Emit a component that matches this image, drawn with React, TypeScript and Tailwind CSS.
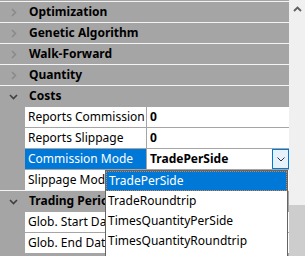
import React from 'react';

type Row =
  | { kind: 'cat'; label: string; open: boolean }
  | { kind: 'prop'; label: string; value?: string; selected?: boolean; combo?: boolean };

const rows: Row[] = [
  { kind: 'cat', label: 'Optimization', open: false },
  { kind: 'cat', label: 'Genetic Algorithm', open: false },
  { kind: 'cat', label: 'Walk-Forward', open: false },
  { kind: 'cat', label: 'Quantity', open: false },
  { kind: 'cat', label: 'Costs', open: true },
  { kind: 'prop', label: 'Reports Commission', value: '0' },
  { kind: 'prop', label: 'Reports Slippage', value: '0' },
  { kind: 'prop', label: 'Commission Mode', value: 'TradePerSide', selected: true, combo: true },
  { kind: 'prop', label: 'Slippage Mode', value: '' },
  { kind: 'cat', label: 'Trading Period', open: true },
  { kind: 'prop', label: 'Glob. Start Date', value: '' },
  { kind: 'prop', label: 'Glob. End Date', value: '' },
];

const options = ['TradePerSide', 'TradeRoundtrip', 'TimesQuantityPerSide', 'TimesQuantityRoundtrip'];

const Chevron: React.FC<{ open: boolean }> = ({ open }) => (
  <svg width="9" height="9" viewBox="0 0 9 9" className="shrink-0">
    {open ? (
      <polyline points="1,3 4.5,6.5 8,3" fill="none" stroke="#404040" strokeWidth="1.6" />
    ) : (
      <polyline points="3,1 6.5,4.5 3,8" fill="none" stroke="#8a8a8a" strokeWidth="1.6" />
    )}
  </svg>
);

const CategoryRow: React.FC<{ label: string; open: boolean }> = ({ label, open }) => (
  <>
    <div className="h-px bg-[#f4f4f4]" />
    <div className="h-[20px] flex items-center">
      <div className="w-[25px] flex justify-center pl-[1px]">
        <Chevron open={open} />
      </div>
      <span className="pl-[4px] text-[12px] font-bold text-black leading-none">{label}</span>
    </div>
  </>
);

const PropRow: React.FC<{ row: Extract<Row, { kind: 'prop' }> }> = ({ row }) => (
  <>
    <div className="h-px" />
    <div className="h-[20px] flex">
      <div className="w-[25px]" />
      <div
        className={`w-[121px] flex items-center pl-[3px] overflow-hidden whitespace-nowrap text-[12px] ${
          row.selected ? 'bg-[#0078d7] text-white' : 'bg-white text-black'
        }`}
      >
        {row.label}
      </div>
      <div className="w-px" />
      <div className="w-[142px] bg-white flex items-center">
        <span className="flex-1 pl-[3px] text-[12px] font-bold text-black whitespace-nowrap">{row.value}</span>
        {row.combo && (
          <div className="w-[17px] h-[20px] bg-[#e5f1fb] border border-[#0078d7] flex items-center justify-center">
            <svg width="8" height="5" viewBox="0 0 8 5">
              <polyline points="0.5,0.5 4,4 7.5,0.5" fill="none" stroke="#333" strokeWidth="1" />
            </svg>
          </div>
        )}
      </div>
    </div>
  </>
);

export default function App() {
  return (
    <div className="w-[305px] h-[256px] flex overflow-hidden relative bg-[#a5a5a5] font-['Noto_Sans',sans-serif] select-none">
      <div className="w-[289px] flex flex-col">
        <div className="h-px" />
        {rows.map((r, i) =>
          r.kind === 'cat' ? (
            <CategoryRow key={i} label={r.label} open={r.open} />
          ) : (
            <PropRow key={i} row={r} />
          )
        )}
      </div>

      <div className="w-[16px] flex flex-col bg-[#f0f0f0]">
        <div className="h-[17px] flex items-center justify-center">
          <svg width="9" height="6" viewBox="0 0 9 6">
            <polyline points="1,5 4.5,1.5 8,5" fill="none" stroke="#606060" strokeWidth="1.8" />
          </svg>
        </div>
        <div className="h-[188px]" />
        <div className="flex-1 bg-[#cdcdcd]" />
      </div>

      <div className="absolute left-[105px] top-[170px] w-[183px] h-[90px] bg-white border border-[#646464] text-[12px] text-black">
        {options.map((o, i) => (
          <div
            key={o}
            className={`h-[20px] flex items-center pl-[2px] whitespace-nowrap ${
              i === 0 ? 'bg-[#0078d7] text-white border border-dotted border-[#e08030]' : ''
            }`}
          >
            {o}
          </div>
        ))}
      </div>
    </div>
  );
}
